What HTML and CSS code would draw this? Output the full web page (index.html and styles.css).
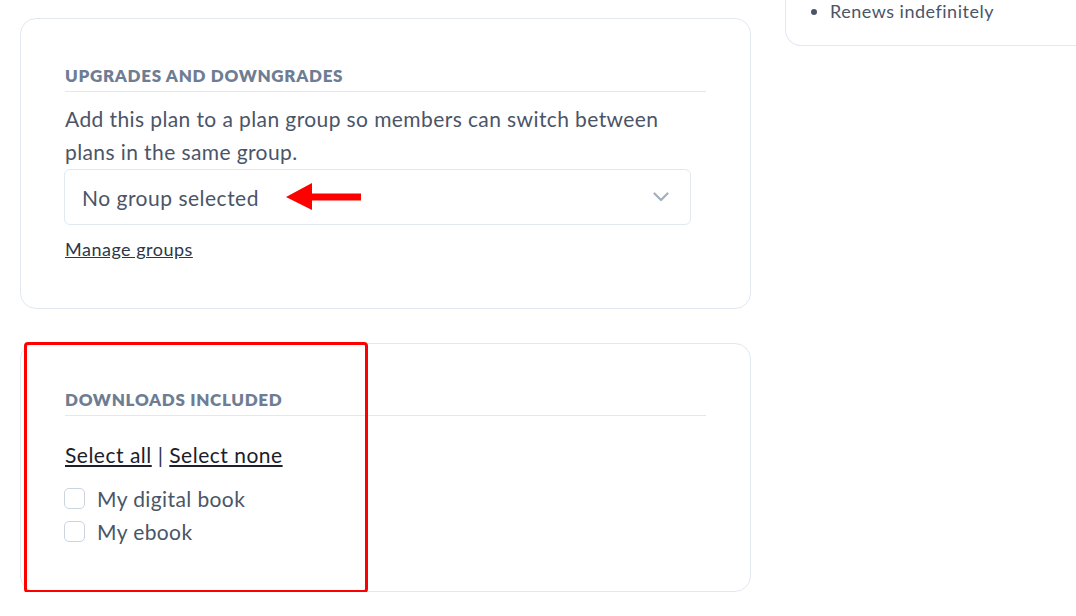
FILE: index.html
```html
<!DOCTYPE html>
<html lang="en">
<head>
<meta charset="utf-8">
<title>Plan settings</title>
<link rel="stylesheet" href="styles.css">
</head>
<body>
<div class="page">
  <div class="main">
    <section class="card card-groups">
      <h3 class="card-title">UPGRADES AND DOWNGRADES</h3>
      <p class="desc">Add this plan to a plan group so members can switch between plans in the same group.</p>
      <div class="select">
        <span class="select-value">No group selected</span>
        <svg class="chevron" width="16" height="10" viewBox="0 0 16 10"><path d="M1.5 1.5 L8 8 L14.5 1.5" fill="none" stroke="#a3aebf" stroke-width="2.2" stroke-linecap="round" stroke-linejoin="round"/></svg>
        <svg class="arrow" width="75" height="27" viewBox="0 0 75 27"><polygon points="0,14 26,0 26,10.5 75,10.5 75,17.5 26,17.5 26,27" fill="#ff0000"/></svg>
      </div>
      <a class="manage" href="#">Manage groups</a>
    </section>
    <section class="card card-downloads">
      <div class="highlight"></div>
      <h3 class="card-title">DOWNLOADS INCLUDED</h3>
      <div class="select-links"><a href="#">Select all</a> | <a href="#">Select none</a></div>
      <ul class="checks">
        <li><span class="box"></span>My digital book</li>
        <li><span class="box"></span>My ebook</li>
      </ul>
    </section>
  </div>
  <aside class="side">
    <div class="side-card">
      <ul class="features">
        <li>Renews indefinitely</li>
      </ul>
    </div>
  </aside>
</div>
</body>
</html>
```
FILE: styles.css
```css
html, body {
  margin: 0;
  padding: 0;
  background: #ffffff;
  overflow: hidden;
}
body {
  font-family: Lato, "Open Sans", Arial, sans-serif;
  color: #4a5568;
}
.page {
  display: flex;
  align-items: flex-start;
  gap: 34px;
  padding-left: 20px;
  width: 1076px;
  box-sizing: border-box;
  overflow: hidden;
}
.main {
  width: 731px;
  flex: none;
  display: flex;
  flex-direction: column;
  gap: 34px;
  padding-top: 18px;
}
.card {
  position: relative;
  border: 1px solid #e2e8f0;
  border-radius: 16px;
  padding: 45px 44px 47px 44px;
  background: #fff;
}
.card-downloads {
  padding-top: 44px;
  padding-bottom: 43px;
}
.card-title {
  margin: 0;
  font-size: 17px;
  line-height: 24px;
  font-weight: 800;
  letter-spacing: 0.7px;
  color: #6e7d93;
  padding-bottom: 3px;
  border-bottom: 1px solid #e2e8f0;
}
.desc {
  margin: 10px 0 0;
  font-size: 21px;
  line-height: 33px;
  letter-spacing: 0.4px;
  color: #4a5568;
}
.select {
  position: relative;
  width: 627px;
  height: 56px;
  box-sizing: border-box;
  margin-top: 1px;
  margin-left: -1px;
  border: 1px solid #e2e8f0;
  border-radius: 6px;
  display: flex;
  align-items: center;
  justify-content: space-between;
  padding: 0 21px 0 17px;
}
.select-value {
  font-size: 21px;
  letter-spacing: 0.5px;
  color: #4a5568;
}
.chevron {
  display: block;
}
.arrow {
  position: absolute;
  left: 221px;
  top: 13px;
}
.manage {
  display: block;
  width: fit-content;
  margin-top: 12px;
  font-size: 18px;
  line-height: 24px;
  letter-spacing: 0.5px;
  color: #2d3748;
  text-decoration: underline;
}
.highlight {
  position: absolute;
  left: 3px;
  top: -2px;
  width: 344px;
  height: 251px;
  box-sizing: border-box;
  border: 3px solid #ff0000;
  border-radius: 4px;
  pointer-events: none;
}
.select-links {
  margin-top: 25px;
  font-size: 21px;
  line-height: 28px;
  letter-spacing: 0.5px;
  color: #2d3748;
}
.select-links a {
  color: #1a202c;
  text-decoration: underline;
}
.checks {
  list-style: none;
  margin: 13px 0 0;
  padding: 0;
}
.checks li {
  display: flex;
  align-items: center;
  height: 33px;
  font-size: 21px;
  letter-spacing: 0.4px;
  color: #4a5568;
}
.box {
  width: 21px;
  height: 21px;
  box-sizing: border-box;
  margin-left: -1px;
  border: 1px solid #cbd5e0;
  border-radius: 5px;
  margin-right: 12px;
  flex: none;
}
.side {
  flex: none;
  width: 400px;
}
.side-card {
  border: 1px solid #e2e8f0;
  border-top: none;
  border-radius: 0 0 0 16px;
  padding: 0 20px 23px 24px;
}
.features {
  margin: 0;
  padding: 0 0 0 20px;
  font-size: 18px;
  line-height: 22px;
  letter-spacing: 0.5px;
  color: #4a5568;
}
.features li::marker {
  color: #4a5568;
}
```
